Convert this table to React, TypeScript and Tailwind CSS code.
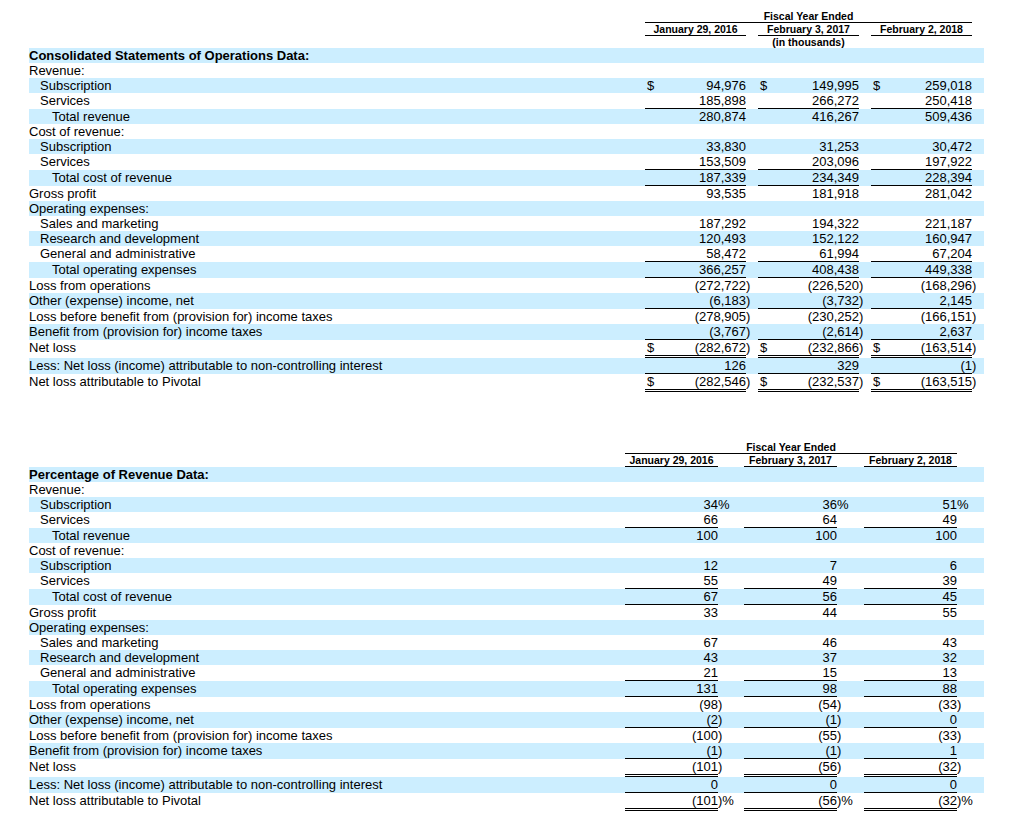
import React from "react";

type Cell = string;
type Row = {
  label: string;
  indent?: 0 | 1 | 2;
  bold?: boolean;
  line?: "single" | "double";
  dollar?: boolean;
  vals?: [Cell, Cell, Cell];
};

const labels: Row[] = [
  { label: "", bold: true },
  { label: "Revenue:" },
  { label: "Subscription", indent: 1, dollar: true },
  { label: "Services", indent: 1, line: "single" },
  { label: "Total revenue", indent: 2 },
  { label: "Cost of revenue:" },
  { label: "Subscription", indent: 1 },
  { label: "Services", indent: 1, line: "single" },
  { label: "Total cost of revenue", indent: 2, line: "single" },
  { label: "Gross profit" },
  { label: "Operating expenses:" },
  { label: "Sales and marketing", indent: 1 },
  { label: "Research and development", indent: 1 },
  { label: "General and administrative", indent: 1, line: "single" },
  { label: "Total operating expenses", indent: 2, line: "single" },
  { label: "Loss from operations" },
  { label: "Other (expense) income, net", line: "single" },
  { label: "Loss before benefit from (provision for) income taxes" },
  { label: "Benefit from (provision for) income taxes", line: "single" },
  { label: "Net loss", line: "double", dollar: true },
  { label: "Less: Net loss (income) attributable to non-controlling interest", line: "single" },
  { label: "Net loss attributable to Pivotal", line: "double", dollar: true },
];

// values by row index (rows without numbers are left out)
const opsData: Record<number, [Cell, Cell, Cell]> = {
  2: ["94,976", "149,995", "259,018"],
  3: ["185,898", "266,272", "250,418"],
  4: ["280,874", "416,267", "509,436"],
  6: ["33,830", "31,253", "30,472"],
  7: ["153,509", "203,096", "197,922"],
  8: ["187,339", "234,349", "228,394"],
  9: ["93,535", "181,918", "281,042"],
  11: ["187,292", "194,322", "221,187"],
  12: ["120,493", "152,122", "160,947"],
  13: ["58,472", "61,994", "67,204"],
  14: ["366,257", "408,438", "449,338"],
  15: ["(272,722)", "(226,520)", "(168,296)"],
  16: ["(6,183)", "(3,732)", "2,145"],
  17: ["(278,905)", "(230,252)", "(166,151)"],
  18: ["(3,767)", "(2,614)", "2,637"],
  19: ["(282,672)", "(232,866)", "(163,514)"],
  20: ["126", "329", "(1)"],
  21: ["(282,546)", "(232,537)", "(163,515)"],
};

const pctData: Record<number, [Cell, Cell, Cell]> = {
  2: ["34%", "36%", "51%"],
  3: ["66", "64", "49"],
  4: ["100", "100", "100"],
  6: ["12", "7", "6"],
  7: ["55", "49", "39"],
  8: ["67", "56", "45"],
  9: ["33", "44", "55"],
  11: ["67", "46", "43"],
  12: ["43", "37", "32"],
  13: ["21", "15", "13"],
  14: ["131", "98", "88"],
  15: ["(98)", "(54)", "(33)"],
  16: ["(2)", "(1)", "0"],
  17: ["(100)", "(55)", "(33)"],
  18: ["(1)", "(1)", "1"],
  19: ["(101)", "(56)", "(32)"],
  20: ["0", "0", "0"],
  21: ["(101)%", "(56)%", "(32)%"],
};

const split = (v: string) => {
  const m = v.match(/^(.*?)([)%]*)$/);
  return m ? [m[1], m[2]] : [v, ""];
};

const indentCls = ["pl-0", "pl-[11px]", "pl-[23px]"];

type TableProps = {
  title: string;
  data: Record<number, [Cell, Cell, Cell]>;
  labelW: string;
  colW: string;
  sufW: [string, string, string];
  spanW: string;
  dollars: boolean;
  thousands?: boolean;
};

const FinTable = ({ title, data, labelW, colW, sufW, spanW, dollars, thousands }: TableProps) => {
  const dates = ["January 29, 2016", "February 3, 2017", "February 2, 2018"];
  return (
    <div className="w-[955px]">
      <div className="text-[10.5px] leading-[12px] font-bold">
        <div className="flex">
          <div className={labelW} />
          <div className={`${spanW} border-b border-black text-center`}>Fiscal Year Ended</div>
        </div>
        <div className="flex">
          <div className={labelW} />
          {dates.map((d, i) => (
            <React.Fragment key={d}>
              <div className={`${colW} border-b border-black text-center whitespace-nowrap`}>{d}</div>
              {i < 2 && <div className={sufW[i]} />}
            </React.Fragment>
          ))}
        </div>
        {thousands && (
          <div className="flex">
            <div className={labelW} />
            <div className={`${spanW} text-center`}>(in thousands)</div>
          </div>
        )}
      </div>
      {labels.map((r, idx) => {
        const vals = data[idx];
        const lineCls =
          r.line === "double"
            ? "border-b-[3px] border-double border-black"
            : r.line === "single"
            ? "border-b border-black"
            : "";
        return (
          <div
            key={idx}
            className={`flex items-start min-h-[15px] ${idx % 2 === 0 ? "bg-[#cceeff]" : "bg-white"}`}
          >
            <div
              className={`${labelW} flex-none whitespace-nowrap ${indentCls[r.indent ?? 0]} ${
                r.bold ? "font-bold" : ""
              }`}
            >
              {idx === 0 ? title : r.label}
            </div>
            {vals &&
              vals.map((v, i) => {
                const [num, suf] = split(v);
                return (
                  <React.Fragment key={i}>
                    <div className={`${colW} flex-none flex justify-between ${lineCls}`}>
                      <span className="pl-[2px]">{dollars && r.dollar ? "$" : ""}</span>
                      <span>{num}</span>
                    </div>
                    <div className={`${sufW[i]} flex-none`}>{suf}</div>
                  </React.Fragment>
                );
              })}
          </div>
        );
      })}
    </div>
  );
};

export default function App() {
  return (
    <div className="min-h-screen bg-white text-black font-['Liberation_Sans',Arial,sans-serif] text-[13px] leading-[15px] pl-[29px] pt-[10px]">
      <FinTable
        title="Consolidated Statements of Operations Data:"
        data={opsData}
        labelW="w-[616px]"
        colW="w-[101px]"
        sufW={["w-[12px]", "w-[12px]", "w-[12px]"]}
        spanW="w-[327px]"
        dollars
        thousands
      />
      <div className="mt-[49px]">
        <FinTable
          title="Percentage of Revenue Data:"
          data={pctData}
          labelW="w-[596px]"
          colW="w-[93px]"
          sufW={["w-[26px]", "w-[27px]", "w-[27px]"]}
          spanW="w-[332px]"
          dollars={false}
        />
      </div>
    </div>
  );
}
